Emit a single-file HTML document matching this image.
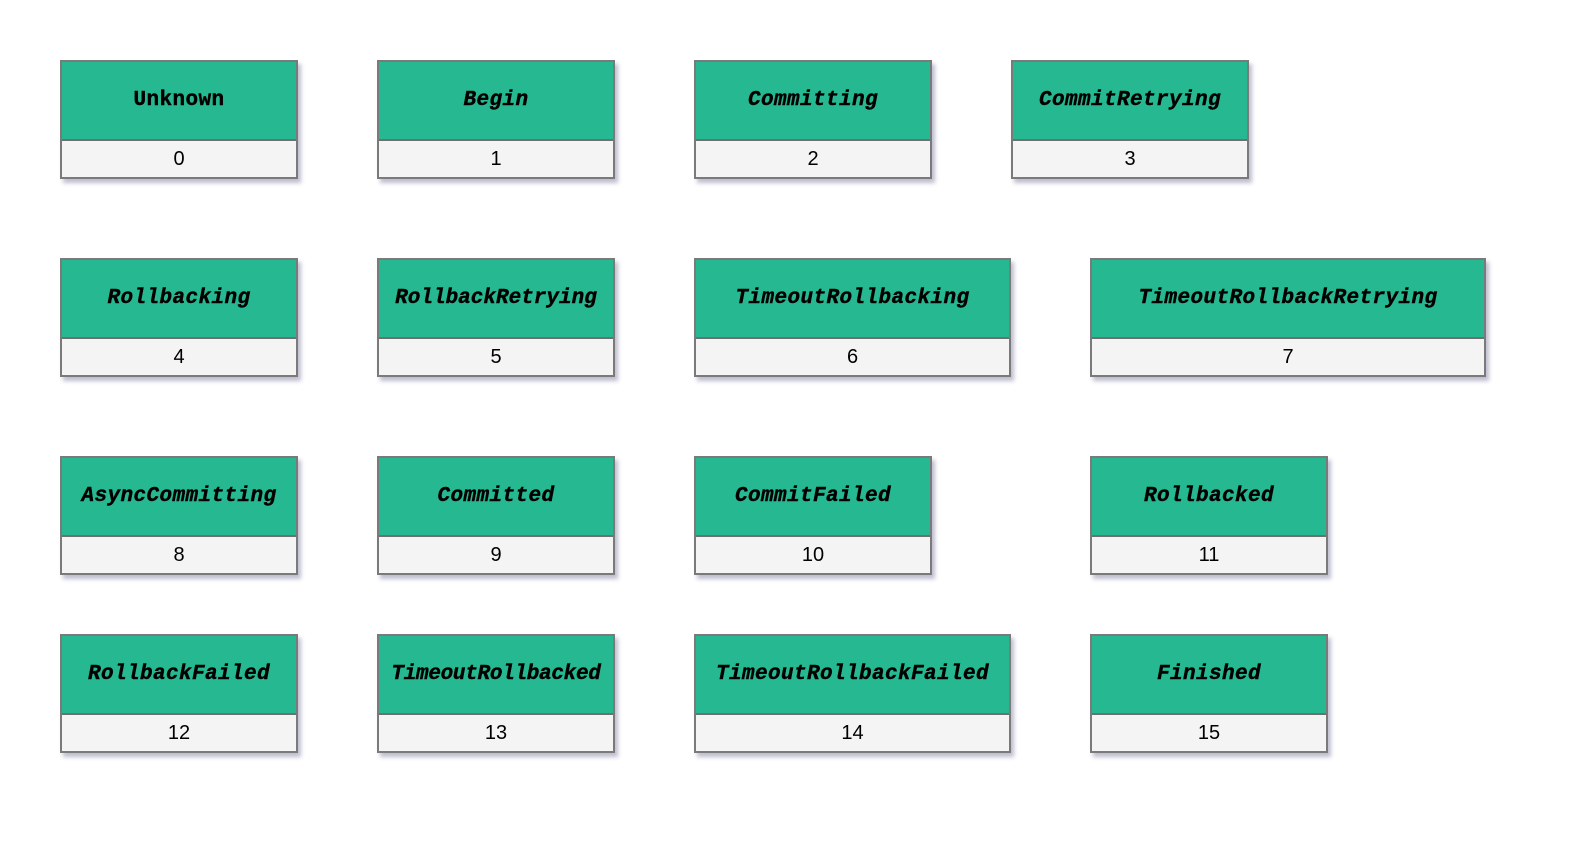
<!DOCTYPE html>
<html><head><meta charset="utf-8"><style>
html,body{margin:0;padding:0;background:#fff;width:1584px;height:844px;overflow:hidden}
.b{position:absolute;height:115px;border:2px solid #7a7a7a;box-shadow:3px 4px 4px rgba(110,110,150,.45);background:#f4f4f4}
.h{height:77px;background:#26b891;border-bottom:2px solid #6f6f6f;display:flex;align-items:center;justify-content:center;font-family:"Liberation Mono",monospace;font-weight:bold;font-style:italic;font-size:21px;letter-spacing:0.4px;color:#000;-webkit-text-stroke:0.4px #000}
.n{height:36px;display:flex;align-items:center;justify-content:center;font-family:"Liberation Sans",sans-serif;font-size:20px;color:#000}
</style></head><body>
<div class="b" style="left:60px;top:60px;width:234px"><div class="h" style="font-style:normal">Unknown</div><div class="n">0</div></div>
<div class="b" style="left:377px;top:60px;width:234px"><div class="h">Begin</div><div class="n">1</div></div>
<div class="b" style="left:694px;top:60px;width:234px"><div class="h">Committing</div><div class="n">2</div></div>
<div class="b" style="left:1011px;top:60px;width:234px"><div class="h">CommitRetrying</div><div class="n">3</div></div>

<div class="b" style="left:60px;top:258px;width:234px"><div class="h">Rollbacking</div><div class="n">4</div></div>
<div class="b" style="left:377px;top:258px;width:234px"><div class="h" style="letter-spacing:0">RollbackRetrying</div><div class="n">5</div></div>
<div class="b" style="left:694px;top:258px;width:313px"><div class="h">TimeoutRollbacking</div><div class="n">6</div></div>
<div class="b" style="left:1090px;top:258px;width:392px"><div class="h">TimeoutRollbackRetrying</div><div class="n">7</div></div>

<div class="b" style="left:60px;top:456px;width:234px"><div class="h">AsyncCommitting</div><div class="n">8</div></div>
<div class="b" style="left:377px;top:456px;width:234px"><div class="h">Committed</div><div class="n">9</div></div>
<div class="b" style="left:694px;top:456px;width:234px"><div class="h">CommitFailed</div><div class="n">10</div></div>
<div class="b" style="left:1090px;top:456px;width:234px"><div class="h">Rollbacked</div><div class="n">11</div></div>

<div class="b" style="left:60px;top:634px;width:234px"><div class="h">RollbackFailed</div><div class="n">12</div></div>
<div class="b" style="left:377px;top:634px;width:234px"><div class="h" style="letter-spacing:-0.3px">TimeoutRollbacked</div><div class="n">13</div></div>
<div class="b" style="left:694px;top:634px;width:313px"><div class="h">TimeoutRollbackFailed</div><div class="n">14</div></div>
<div class="b" style="left:1090px;top:634px;width:234px"><div class="h">Finished</div><div class="n">15</div></div>
</body></html>
